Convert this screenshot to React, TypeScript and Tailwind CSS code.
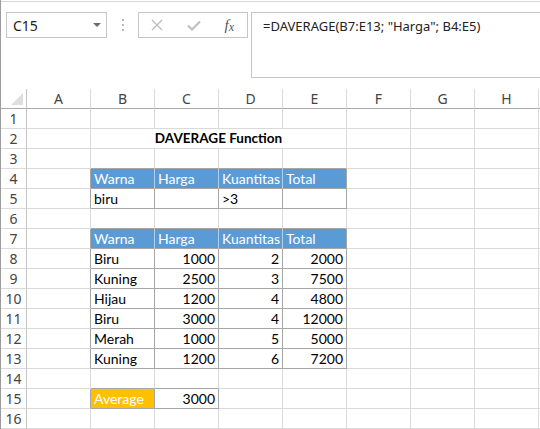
import React from "react";

const COLS = ["A", "B", "C", "D", "E", "F", "G", "H", ""];
const NUM_ROWS = 16;

const data: Record<number, (string | undefined)[]> = {
  4: [undefined, "Warna", "Harga", "Kuantitas", "Total"],
  5: [undefined, "biru", "", ">3", ""],
  7: [undefined, "Warna", "Harga", "Kuantitas", "Total"],
  8: [undefined, "Biru", "1000", "2", "2000"],
  9: [undefined, "Kuning", "2500", "3", "7500"],
  10: [undefined, "Hijau", "1200", "4", "4800"],
  11: [undefined, "Biru", "3000", "4", "12000"],
  12: [undefined, "Merah", "1000", "5", "5000"],
  13: [undefined, "Kuning", "1200", "6", "7200"],
  15: [undefined, "Average", "3000"],
};

function inBox(r: number, c: number) {
  if (c >= 1 && c <= 4 && r >= 4 && r <= 5) return true;
  if (c >= 1 && c <= 4 && r >= 7 && r <= 13) return true;
  if (r === 15 && c >= 1 && c <= 2) return true;
  return false;
}
function isBlue(r: number, c: number) {
  return (r === 4 || r === 7) && c >= 1 && c <= 4;
}

function cellClass(r: number, c: number) {
  let right = "border-r-[#dadada]";
  if (inBox(r, c) || inBox(r, c + 1)) {
    right = isBlue(r, c) && isBlue(r, c + 1) ? "border-r-[#b4cfea]" : "border-r-[#a6a6a6]";
  }
  let bottom = "border-b-[#dadada]";
  if (inBox(r, c) || inBox(r + 1, c)) bottom = "border-b-[#a6a6a6]";
  let bg = "bg-white text-black";
  if (isBlue(r, c)) bg = "bg-[#5b9bd5] text-white";
  if (r === 15 && c === 1) bg = "bg-[#ffc000] text-white";
  return `${right} ${bottom} ${bg}`;
}

function isNumeric(s: string) {
  return /^\d+$/.test(s);
}

export default function App() {
  const rows: React.ReactNode[] = [];
  for (let r = 1; r <= NUM_ROWS; r++) {
    rows.push(
      <div
        key={`rh${r}`}
        className="h-5 border-r border-b border-r-[#c4c4c4] border-b-[#dadada] bg-white text-[#444] text-[14px] leading-[19px] text-center font-['Noto_Sans',sans-serif]"
      >
        {r}
      </div>
    );
    if (r === 2) {
      rows.push(
        <div key="c2a" className="h-5 border-r border-b border-r-[#dadada] border-b-[#dadada] bg-white" />
      );
      rows.push(
        <div
          key="c2m"
          className="col-span-4 h-5 border-r border-b border-r-[#dadada] border-b-[#dadada] bg-white text-center font-bold text-[13.5px] leading-[19px] text-black"
        >
          DAVERAGE Function
        </div>
      );
      for (let c = 5; c < COLS.length; c++) {
        rows.push(
          <div key={`c2${c}`} className="h-5 border-r border-b border-r-[#dadada] border-b-[#dadada] bg-white" />
        );
      }
      continue;
    }
    for (let c = 0; c < COLS.length; c++) {
      const v = data[r]?.[c];
      const right = v !== undefined && isNumeric(v);
      rows.push(
        <div
          key={`c${r}-${c}`}
          className={`h-5 border-r border-b px-[3px] text-[14px] leading-[19px] whitespace-nowrap overflow-hidden ${
            right ? "text-right" : "text-left"
          } ${cellClass(r, c)}`}
        >
          {v}
        </div>
      );
    }
  }

  return (
    <div className="w-[540px] h-[429px] overflow-hidden bg-white border-l border-l-[#9c9c9c] font-['Lato',sans-serif] relative">
      {/* toolbar */}
      <div className="h-[88px] border-t border-t-[#d6d6d6] mt-px relative">
        <div className="flex items-start pt-[10px] pl-[5px]">
          {/* name box */}
          <div className="w-[102px] h-[26px] border border-[#c6c6c6] flex items-center justify-between pl-[6px] pr-[5px] font-['Noto_Sans',sans-serif] text-[14px] text-[#222]">
            <span>C15</span>
            <svg width="8" height="5" viewBox="0 0 8 5">
              <path d="M0 0 H8 L4 4 Z" fill="#6b6b6b" />
            </svg>
          </div>
          {/* dots */}
          <div className="w-[31px] h-[26px] flex flex-col items-center justify-center gap-[3px]">
            <div className="w-[2px] h-[2px] bg-[#b5b5b5]" />
            <div className="w-[2px] h-[2px] bg-[#b5b5b5]" />
            <div className="w-[2px] h-[2px] bg-[#b5b5b5]" />
          </div>
          {/* buttons */}
          <div className="w-[110px] h-[26px] border border-[#c6c6c6] flex items-center">
            <div className="w-[37px] flex justify-center">
              <svg width="12" height="12" viewBox="0 0 12 12">
                <path d="M1 1 L11 11 M11 1 L1 11" stroke="#bdbdbd" strokeWidth="1.4" />
              </svg>
            </div>
            <div className="w-[36px] flex justify-center">
              <svg width="14" height="11" viewBox="0 0 14 11">
                <path d="M1 5.5 L5 9.5 L13 1.5" stroke="#c0c0c0" strokeWidth="2.2" fill="none" />
              </svg>
            </div>
            <div className="w-[36px] flex justify-center font-['Liberation_Serif',serif] italic text-[15px] text-[#555] leading-none">
              <span>f</span>
              <span className="text-[12px] mt-[3px]">x</span>
            </div>
          </div>
          {/* formula */}
          <div className="ml-[3px] w-[291px] h-[66px] border border-[#c6c6c6] border-r-0 pl-[11px] pt-[4px] font-['Noto_Sans',sans-serif] text-[13px] text-[#222] whitespace-nowrap">
            =DAVERAGE(B7:E13; "Harga"; B4:E5)
          </div>
        </div>
      </div>
      {/* grid */}
      <div className="grid grid-cols-[26px_repeat(8,64px)_12px]">
        <div className="h-5 border-r border-b border-r-[#c4c4c4] border-b-[#ababab] bg-white relative">
          <div className="absolute right-[3px] bottom-[3px] w-0 h-0 border-l-[12px] border-l-transparent border-b-[12px] border-b-[#dfdfdf]" />
        </div>
        {COLS.map((c, i) => (
          <div
            key={`ch${i}`}
            className="h-5 border-r border-b border-r-[#dadada] border-b-[#ababab] bg-white text-center text-[#444] text-[14px] leading-[19px] font-['Noto_Sans',sans-serif]"
          >
            {c}
          </div>
        ))}
        {rows}
      </div>
    </div>
  );
}
